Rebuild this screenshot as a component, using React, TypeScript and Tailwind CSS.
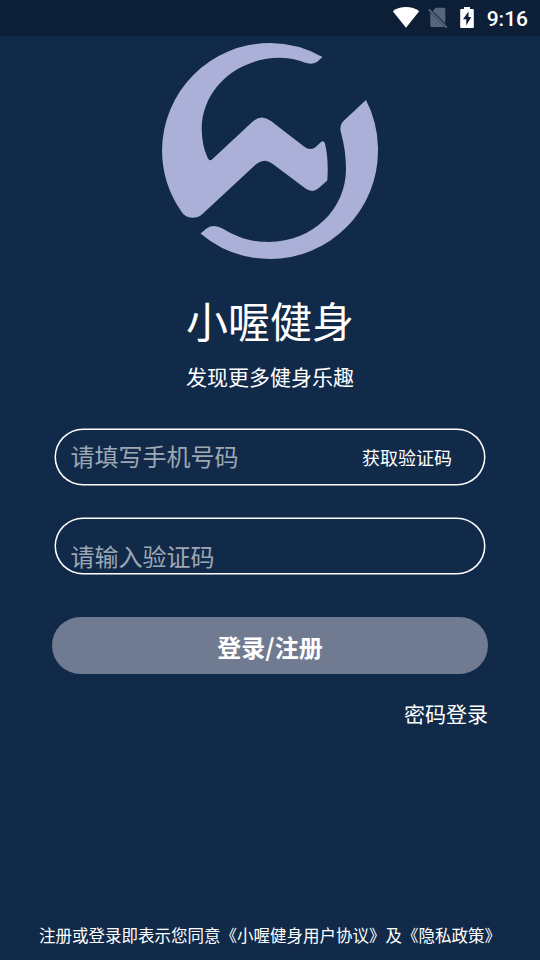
/**
 * Login screen: phone status bar, brand logo, SMS code form and agreement line.
 */

function StatusBar() {
  return (
    <div className="flex h-9 items-center justify-end bg-[#0d1f37] pr-[12px] font-[Roboto,sans-serif] text-white">
      <svg width="28" height="22" viewBox="0 0 28 22" fill="currentColor" className="mr-[8px]" aria-hidden="true">
        <path d="M14 20.800.8 4.200C4.600 1.300 9 .1 14 .1s9.400 1.200 13.200 4.100z" />
      </svg>
      <svg width="20" height="22" viewBox="0 0 20 22" className="mr-[12px]" aria-hidden="true">
        <path d="M7.500.7h8.300a1.500 1.500 0 0 1 1.500 1.500v14.300L4.700 3.900zM2.300 5.500 16.800 20H3.800a1.500 1.500 0 0 1-1.500-1.500z" fill="#56657a" />
        <path d="M.8 2.300 18.800 20.600" stroke="#56657a" strokeWidth="1.900" />
      </svg>
      <svg width="14" height="22" viewBox="0 0 14 22" className="mr-[13px]" aria-hidden="true">
        <path d="M4 0h6v2h2.800a1 1 0 0 1 1 1V19.900a1 1 0 0 1-1 1H1.200a1 1 0 0 1-1-1V3a1 1 0 0 1 1-1H4z" fill="#fff" />
        <path d="M8.500 4.500 3 12.200h3.300v6.300L11.200 10H8.500z" fill="#0d1f37" />
      </svg>
      <span className="pt-px text-[21px] leading-9 font-medium">9:16</span>
    </div>
  )
}

function Logo() {
  return (
    <svg width="216" height="216" viewBox="162 43 216 216" fill="#aab0d8" aria-hidden="true">
      {/* Upper sweep running into the zigzag */}
      <path d="M322.500 57A108 108 0 0 0 270 43A108 108 0 0 0 162 151A108 108 0 0 0 181 211Q185 217.800 192.500 217.800Q198.500 217.800 203 213.500L256 164.300Q264 157.500 272.500 163.800L304.500 187.800Q312 193.800 318.500 188.300L327.300 180.500Q328.800 160 325 143.500Q323.800 140 321 142L316 146.800Q310.500 151.500 304 146.500L271 121Q261.500 113.800 253 121.300L212.500 159Q209.500 162 207.500 157.500Q202 146 201.700 129C202 88 238 57.700 280 57.800C291 57.900 298 60.200 304.500 62.500Q311.500 65 317 62z" />
      {/* Lower sweep */}
      <path d="M366 100A108 108 0 0 1 378 151A108 108 0 0 1 270 259A108 108 0 0 1 200.500 233.500L206.500 228.500Q213.500 223.500 223 228.700C239 238.300 252 242 269 242C313 241.500 346 209 346 169Q345.800 150 341.300 134Q338.500 125.500 344 120.500z" />
    </svg>
  )
}

type FieldProps = {
  placeholder: string
  /** Vertical placement of the input text inside the pill */
  inputClassName: string
  action?: string
}

function Field({ placeholder, inputClassName, action }: FieldProps) {
  return (
    <div className="flex h-[54px] w-[428px] items-start rounded-full pr-[32px] pl-[14.5px] shadow-[0_0_0_1.5px_#fff]">
      <input
        type="text"
        placeholder={placeholder}
        className={`h-9 min-w-0 flex-1 bg-transparent text-[24px] leading-9 text-white outline-none placeholder:text-[#9ea7b4] placeholder:opacity-100 ${inputClassName}`}
      />
      {action && (
        <button type="button" className="mt-[14px] text-[18px] leading-[27px] text-white">
          {action}
        </button>
      )}
    </div>
  )
}

export default function App() {
  return (
    <div className="flex h-[960px] w-[540px] flex-col overflow-hidden bg-[#112a49] font-['Noto_Sans_CJK_SC',sans-serif] text-white">
      <StatusBar />

      <main className="flex flex-1 flex-col items-center pt-[7px]">
        <Logo />
        <h1 className="mt-[29px] text-[42px] leading-[63px] font-normal">小喔健身</h1>
        <p className="mt-[9px] text-[21px] leading-[32px]">发现更多健身乐趣</p>

        <form className="mt-[38px] flex flex-col items-center">
          <Field placeholder="请填写手机号码" inputClassName="mt-[8px]" action="获取验证码" />
          <div className="mt-[35px]">
            <Field placeholder="请输入验证码" inputClassName="mt-[19px]" />
          </div>
          <button
            type="button"
            className="mt-[44px] h-[57px] w-[436px] rounded-full bg-[#707a91] pt-px text-[24px] leading-[57px] font-bold"
          >
            登录/注册
          </button>
          <a className="mt-[23px] self-end text-[21px] leading-[32px]">密码登录</a>
        </form>
      </main>

      <footer className="pb-[13px] text-center text-[16.5px] leading-6 whitespace-nowrap">
        注册或登录即表示您同意《小喔健身用户协议》及《隐私政策》
      </footer>
    </div>
  )
}
